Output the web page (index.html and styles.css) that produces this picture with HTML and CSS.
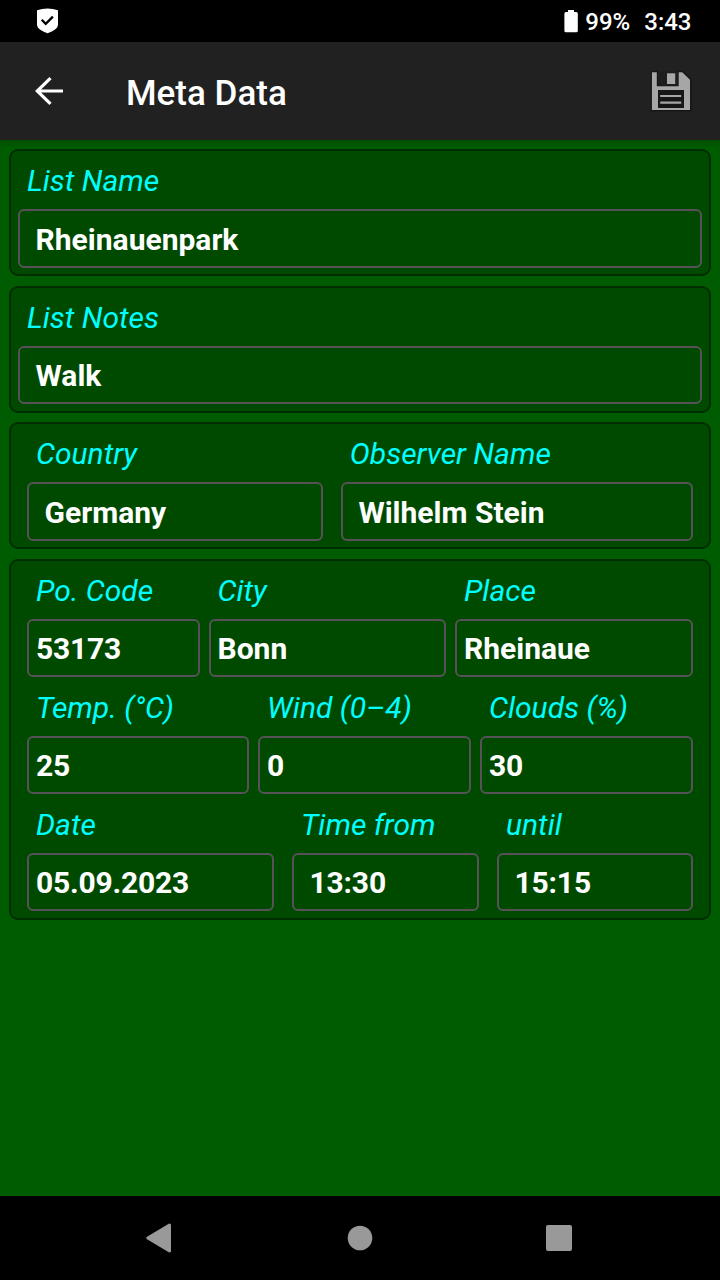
FILE: index.html
```html
<!DOCTYPE html>
<html lang="en">
<head>
<meta charset="utf-8">
<title>Meta Data</title>
<link rel="stylesheet" href="styles.css">
</head>
<body>
<div class="screen">
  <div class="status">
    <svg class="shield" width="22" height="26" viewBox="0 0 22 26"><path d="M0 2.2Q10.5-1.2 21 2.2V16.5C21 21 15.5 23.4 10.5 25.2C5.5 23.4 0 21 0 16.5Z" fill="#fff"/><path d="M4.7 11.8L8.7 15.8L15.9 8.6" fill="none" stroke="#000" stroke-width="2.3"/></svg>
    <svg class="battery" width="14" height="24" viewBox="0 0 14 24"><path d="M4 0.9H10V2.9H12.3Q13.8 2.9 13.8 4.4V21.7Q13.8 23.2 12.3 23.2H1.9Q0.4 23.2 0.4 21.7V4.4Q0.4 2.9 1.9 2.9H4Z" fill="#fff"/></svg>
    <span class="percent">99%</span>
    <span class="clock">3:43</span>
  </div>
  <header class="appbar">
    <svg class="back" width="30" height="28" viewBox="0 0 30 28"><path d="M28 14H2.5M15.5 1.2L2.2 14L15.5 26.8" fill="none" stroke="#fff" stroke-width="3.2"/></svg>
    <h1 class="title">Meta Data</h1>
    <svg class="save" width="42" height="42" viewBox="0 0 42 42"><path d="M2.2 1.5H7.5V15.5H28V1.5H32.5L40.7 9.5V40.7H1.2V2.5Q1.2 1.5 2.2 1.5Z" fill="#a6a6a6" stroke="#161616" stroke-width="1.4"/><path d="M8 1.5V15.5H28V1.5Z" fill="#1d1d1d"/><path d="M17 3.3H25.2V14H17Z" fill="#a6a6a6"/><path d="M8 20H34V38H8Z" fill="#161616"/><path d="M10.2 26H31.2M10.2 32.6H31.2" fill="none" stroke="#a6a6a6" stroke-width="2.2"/></svg>
  </header>
  <main class="content">
    <section class="card"><div class="row">
      <div class="field full"><label class="label">List Name</label><div class="value">Rheinauenpark</div></div>
    </div></section>
    <section class="card"><div class="row">
      <div class="field full"><label class="label">List Notes</label><div class="value">Walk</div></div>
    </div></section>
    <section class="card inset"><div class="row wide">
      <div class="field country"><label class="label">Country</label><div class="value">Germany</div></div>
      <div class="field observer"><label class="label">Observer Name</label><div class="value">Wilhelm Stein</div></div>
    </div></section>
    <section class="card inset">
      <div class="row place">
        <div class="field"><label class="label">Po. Code</label><div class="value tight num">53173</div></div>
        <div class="field"><label class="label">City</label><div class="value tight">Bonn</div></div>
        <div class="field"><label class="label">Place</label><div class="value tight">Rheinaue</div></div>
      </div>
      <div class="row weather">
        <div class="field"><label class="label">Temp. (°C)</label><div class="value tight num">25</div></div>
        <div class="field"><label class="label">Wind (0–4)</label><div class="value tight num">0</div></div>
        <div class="field"><label class="label">Clouds (%)</label><div class="value tight num">30</div></div>
      </div>
      <div class="row time">
        <div class="field"><label class="label">Date</label><div class="value tight num">05.09.2023</div></div>
        <div class="field"><label class="label">Time from</label><div class="value num">13:30</div></div>
        <div class="field"><label class="label">until</label><div class="value num">15:15</div></div>
      </div>
    </section>
  </main>
  <nav class="nav">
    <svg width="26" height="30" viewBox="0 0 26 30"><path d="M23.5 2L1.8 15L23.5 28Z" fill="#999" stroke="#999" stroke-width="3" stroke-linejoin="round"/></svg>
    <svg class="home" width="26" height="26" viewBox="0 0 26 26"><circle cx="13" cy="13" r="12.3" fill="#999"/></svg>
    <svg width="26" height="26" viewBox="0 0 26 26"><rect width="26" height="26" rx="2" fill="#999"/></svg>
  </nav>
</div>
</body>
</html>
```
FILE: styles.css
```css
* { box-sizing: border-box; }
body { margin: 0; font-family: Roboto, "Liberation Sans", sans-serif; }
.screen { width: 720px; height: 1280px; display: flex; flex-direction: column; background: #005c00; overflow: hidden; }
.status { height: 42px; flex: none; display: flex; align-items: center; padding: 0 28.5px 0 37px; background: #000; color: #fff; font-size: 24px; font-weight: 500; line-height: 42px; }
.battery { margin-left: auto; }
.percent { margin-left: 7px; padding-top: 2px; }
.clock { margin-left: 14px; padding-top: 2px; }
.appbar { height: 98px; flex: none; display: flex; align-items: center; padding: 0 28px 0 35px; background: #212121; color: #fff; }
.title { margin: 6px 0 0 61px; font-size: 35px; font-weight: 500; line-height: 42px; }
.save { margin-left: auto; }
.content { flex: 1; display: flex; flex-direction: column; gap: 9.5px; padding: 9.4px 9px 0; background: linear-gradient(#005000, #005c00 8px); }
.card { border: 2px solid #002e00; border-radius: 9px; background: #004a00; padding: 0 7px 6.7px; }
.inset { padding: 0 16px 6.7px; }
.row { display: grid; column-gap: 9px; }
.wide { grid-template-columns: 295.8px 352.2px; column-gap: 18px; }
.place { grid-template-columns: 172.5px 237.5px 238px; }
.weather { grid-template-columns: 222px 213px 213px; }
.time { grid-template-columns: 247px 187px 196px; column-gap: 18px; }
.label { display: block; height: 58.5px; padding: 0 0 0 9px; line-height: 61px; font-size: 30px; font-style: italic; color: #0ff; white-space: nowrap; }
.row:first-child .label { height: 57.8px; line-height: 60px; }
.value { height: 58.5px; border: 2px solid #575257; border-radius: 6px; padding: 0 0 0 15.6px; line-height: 56px; font-size: 30px; font-weight: 700; color: #fff; white-space: nowrap; }
.card:nth-child(odd) .value { line-height: 57px; }
.value.tight { padding-left: 7px; }
.num { letter-spacing: -0.2px; }
.nav { height: 84px; flex: none; display: flex; align-items: center; justify-content: space-between; padding: 0 148px 0 146px; background: #000; }
.home { margin-left: 2px; }
```
